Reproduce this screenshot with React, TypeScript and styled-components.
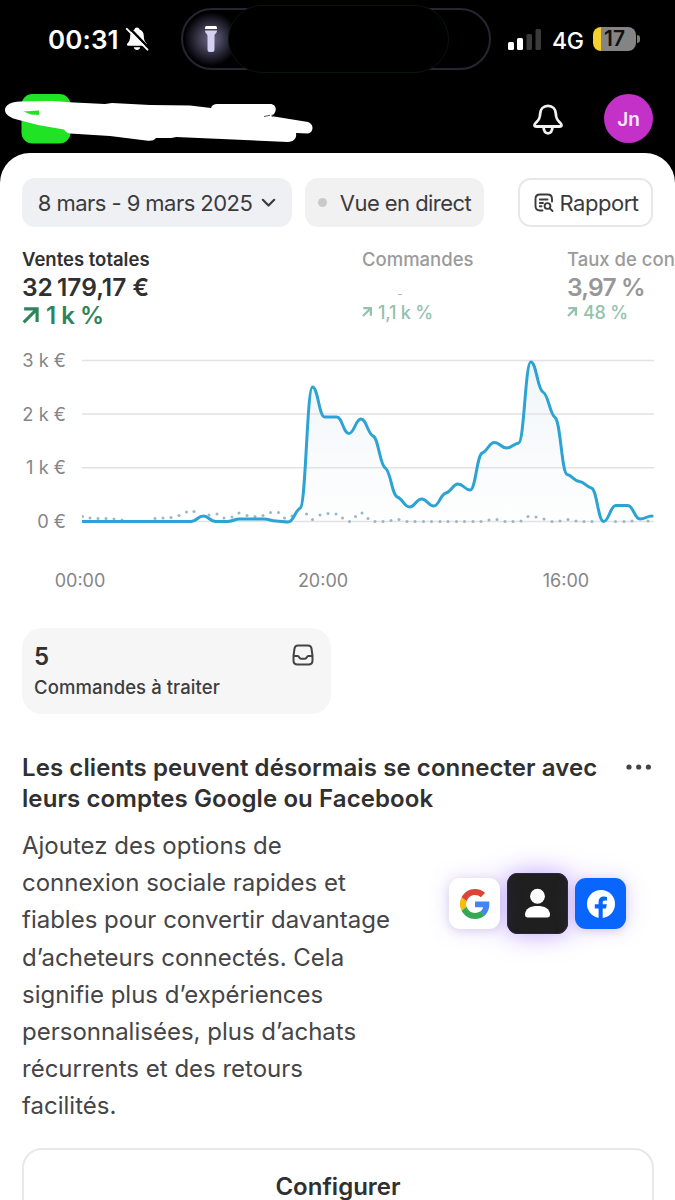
import React from "react";
import styled, { createGlobalStyle, css } from "styled-components";

const GlobalStyle = createGlobalStyle`
  * { box-sizing: border-box; }
  html, body { margin: 0; padding: 0; background: #000; }
  body { font-family: Inter, "Liberation Sans", sans-serif; color: #303030; }
`;

const Screen = styled.div`
  width: 675px;
  height: 1200px;
  overflow: hidden;
  background: #000;
  display: flex;
  flex-direction: column;
`;

/* ---------- status bar ---------- */

const StatusBar = styled.div`
  height: 80px;
  flex: none;
  display: flex;
  align-items: center;
  padding: 0 34px 2px 48px;
  color: #fff;
`;

const Clock = styled.div`
  width: 77px;
  font-size: 26px;
  font-weight: 600;
  letter-spacing: 0.1px;
  white-space: nowrap;
`;

const Island = styled.div`
  position: relative;
  width: 310px;
  height: 62px;
  margin-left: 32px;
  border: 2px solid #272532;
  border-radius: 31px;
  display: flex;
  align-items: center;
`;

const Glow = styled.div`
  width: 54px;
  height: 54px;
  margin-left: 1px;
  display: flex;
  align-items: center;
  justify-content: center;
  background: radial-gradient(closest-side, #6b6788 0%, #454259 38%, #1d1b27 74%, transparent 100%);
`;

const IslandMask = styled.div`
  position: absolute;
  left: 45px;
  top: -5px;
  width: 221px;
  height: 68px;
  border: 1px solid #07170b;
  border-radius: 34px;
  background: #000;
`;

const Signal = styled.svg`
  margin: 1px 0 0 17px;
`;

const Network = styled.div`
  margin: 3px 0 0 10px;
  width: 41px;
  font-size: 23px;
  font-weight: 500;
  letter-spacing: -0.4px;
`;

const Battery = styled.div`
  width: 43px;
  height: 24px;
  border-radius: 8px;
  background: linear-gradient(90deg, #f7cf2f 0 8px, #848484 8px);
  color: #111;
  font-size: 21px;
  line-height: 24px;
  font-weight: 600;
  text-align: center;
`;

const BatteryTip = styled.div`
  width: 3px;
  height: 8px;
  margin-left: 1px;
  border-radius: 0 3px 3px 0;
  background: #7c7c7c;
`;

/* ---------- store header ---------- */

const StoreHeader = styled.header`
  height: 73px;
  flex: none;
  display: flex;
  align-items: center;
  padding: 4px 22px 0 0;
`;

const StoreMark = styled.svg`
  flex: none;
  display: block;
`;

const BellIcon = styled.svg`
  margin: 2px 0 0 auto;
`;

const Avatar = styled.div`
  width: 49px;
  height: 49px;
  margin-left: 41px;
  border-radius: 50%;
  background: #c431c8;
  color: #f6e6f7;
  font-size: 19px;
  font-weight: 600;
  line-height: 51px;
  text-align: center;
`;

/* ---------- sheet ---------- */

const Sheet = styled.main`
  flex: 1;
  min-height: 0;
  background: #fff;
  border-radius: 30px 30px 0 0;
  padding: 25px 0 0 22px;
  overflow: hidden;
`;

const FilterRow = styled.div`
  display: flex;
  height: 49px;
  margin-right: 22px;
`;

const Pill = styled.button<{ $w: number; $bg?: string; $outlined?: boolean }>`
  width: ${(p) => p.$w}px;
  height: 49px;
  padding: 0;
  border: ${(p) => (p.$outlined ? "2px solid #e7e7e7" : "0")};
  border-radius: 13px;
  background: ${(p) => p.$bg ?? "#fff"};
  display: flex;
  align-items: center;
  justify-content: center;
  color: #3b3b3d;
  font-family: inherit;
  font-size: 22px;
  letter-spacing: -0.55px;
  white-space: nowrap;
  & + & { margin-left: 13px; }
  ${(p) => p.$outlined && css`&&& { margin-left: auto; padding-left: 2px; letter-spacing: -0.45px; }`}
  svg { flex: none; }
`;

const LiveDot = styled.span`
  width: 9px;
  height: 9px;
  border-radius: 50%;
  background: #c9c9c9;
  margin-right: 13px;
`;

const Metrics = styled.div`
  display: grid;
  grid-template-columns: 340px 205px 160px;
  margin-top: 19px;
  height: 91px;
`;

const Metric = styled.div`
  display: flex;
  flex-direction: column;
  white-space: nowrap;
`;

const MetricLabel = styled.div<{ $active?: boolean }>`
  height: 26px;
  line-height: 26px;
  font-size: 18.5px;
  font-weight: ${(p) => (p.$active ? 600 : 500)};
  color: ${(p) => (p.$active ? "#303030" : "#9b9b9b")};
`;

const MetricValue = styled.div<{ $active?: boolean }>`
  height: 31px;
  line-height: 31px;
  font-size: 24.5px;
  letter-spacing: ${(p) => (p.$active ? 0 : -0.8)}px;
  font-weight: 600;
  color: ${(p) => (p.$active ? "#303030" : "#979797")};
`;

const MetricDelta = styled.div<{ $active?: boolean }>`
  height: ${(p) => (p.$active ? 24 : 18)}px;
  display: flex;
  align-items: center;
  gap: ${(p) => (p.$active ? 7 : 6)}px;
  font-size: ${(p) => (p.$active ? 24 : 18)}px;
  letter-spacing: ${(p) => (p.$active ? -0.5 : -0.2)}px;
  font-weight: ${(p) => (p.$active ? 600 : 500)};
  color: ${(p) => (p.$active ? "#2e855c" : "#93c2ad")};
`;

const HiddenValueMark = styled.i`
  display: block;
  width: 4px;
  height: 1px;
  margin: 22px 0 8px 36px;
  background: #b5b5b5;
`;

const ChartArea = styled.section`
  display: flex;
  height: 190px;
  margin-top: 10px;
`;

const YAxis = styled.div`
  width: 44px;
  display: flex;
  flex-direction: column;
  text-align: right;
  font-size: 18.3px;
  color: #858588;
  white-space: nowrap;
  span { flex: none; height: 53.7px; line-height: 27px; }
`;

const Plot = styled.svg`
  margin-left: 16px;
  display: block;
`;

const XAxis = styled.div`
  display: flex;
  height: 26px;
  margin-top: 31px;
  margin-left: 22px;
  font-size: 18px;
  line-height: 26px;
  color: #858588;
  span { width: 72px; text-align: center; margin-right: 171px; flex: none; }
`;

const TaskCard = styled.section`
  width: 309px;
  height: 86px;
  margin-top: 34px;
  border-radius: 20px;
  background: #f6f6f6;
  padding: 14px 17px 0 12px;
  display: grid;
  grid-template-columns: 1fr auto;
  grid-template-rows: 29px 30px;
`;

const TaskCount = styled.div`
  font-size: 24px;
  line-height: 29px;
  font-weight: 600;
`;

const TaskLabel = styled.div`
  font-size: 18.5px;
  line-height: 32px;
  letter-spacing: 0.07px;
  font-weight: 500;
  color: #3d3d3f;
  white-space: nowrap;
`;

const PromoHeader = styled.div`
  display: flex;
  justify-content: space-between;
  margin-top: 38px;
`;

const PromoTitle = styled.h2`
  margin: 0;
  font-size: 24px;
  line-height: 31px;
  letter-spacing: 0.09px;
  font-weight: 600;
  white-space: nowrap;
`;

const MoreIcon = styled.svg`
  margin: 12px 23.5px 0 0;
`;

const PromoBody = styled.div`
  display: flex;
  margin-top: 13px;
`;

const PromoText = styled.p`
  margin: 0;
  width: 427px;
  font-size: 24px;
  line-height: 37.2px;
  color: #454547;
  white-space: nowrap;
`;

const Badges = styled.div`
  display: flex;
  align-items: center;
  gap: 7px;
  height: 62px;
  margin-top: 45.5px;
`;

const Badge = styled.div<{ $size: number; $bg: string; $glow: string; $front?: boolean }>`
  position: relative;
  z-index: ${(p) => (p.$front ? 0 : 1)};
  width: ${(p) => p.$size}px;
  height: ${(p) => p.$size}px;
  border-radius: 11px;
  background: ${(p) => p.$bg};
  box-shadow: ${(p) => p.$glow};
  display: flex;
  align-items: center;
  justify-content: center;
`;

const ConfigureButton = styled.button`
  display: block;
  width: 632px;
  height: 76px;
  margin-top: 23.5px;
  border: 2px solid #e8e8e8;
  border-radius: 20px;
  background: #fff;
  color: #303030;
  font-family: inherit;
  font-size: 24px;
  font-weight: 600;
`;

/* ---------- chart data, in plot pixels ---------- */

const STEP = 12.13;
const SALES = [
  521.5, 521.5, 521.5, 521.5, 521.5, 521.5, 521.5, 521.5, 521.5, 521.5, 516, 521.5,
  521.5, 519, 519, 519, 521, 522, 508, 387, 417, 417, 433.5, 419, 436, 468, 497, 507,
  499, 506, 493, 484, 490, 453, 442.5, 448, 443, 362, 392, 417.5, 474.5, 481.5, 488,
  521.5, 505.5, 505.5, 519, 516,
];

const PREVIOUS: [number, number][] = [
  [82.5, 516.5], [90, 518], [98, 518.5], [106, 518.5], [114, 519], [122, 520],
  [155, 518.5], [163, 518], [171, 517.5], [179, 515.5], [186.5, 512], [194, 511.5],
  [209, 515], [217, 514], [224, 518], [232, 517], [239, 513], [247, 515.5],
  [255, 516.5], [263, 515.5], [270.5, 512.5], [278.5, 512.5], [284.5, 518], [292, 516],
  [306.5, 514], [312.5, 519.5], [320, 515], [328, 513.5], [336, 514], [342.5, 518],
  [349.5, 521.5], [355.5, 516.5], [362, 513], [368, 518.5], [375, 521.5], [383, 521.5],
  [391, 520.5], [399, 519.5], [407, 521.5], [415, 521.5], [423.5, 521.5], [431.5, 521.5],
  [440, 521.5], [448, 521.5], [456.5, 521.5], [464.5, 521.5], [473, 521.5], [481, 521.5],
  [489, 520], [497, 519.5], [505, 521.5], [513, 521.5], [521, 521], [528, 516.5],
  [536, 517], [544, 519], [552, 521.5], [560, 521], [568, 519.5], [576, 521],
  [584, 521.5], [592, 521.5], [615.5, 521.5], [624, 521.5], [632, 521], [648, 521],
];

/* Monotone cubic interpolation through evenly spaced samples. */
function monotonePath(values: number[], step: number): string {
  const n = values.length;
  const slopes = values.slice(1).map((v, i) => (v - values[i]) / step);
  const tangents = values.map((_, i) => {
    if (i === 0 || i === n - 1) return 0;
    const a = slopes[i - 1];
    const b = slopes[i];
    if (a * b <= 0) return 0;
    return Math.sign(a) * Math.min(Math.abs(a), Math.abs(b), Math.abs(a + b) / 4) * 0.4;
  });
  let d = `M0 ${values[0]}`;
  for (let i = 1; i < n; i++) {
    const x0 = (i - 1) * step;
    const x1 = i * step;
    const h = step / 2.2;
    d += `C${x0 + h} ${values[i - 1] + tangents[i - 1] * h} ${x1 - h} ${values[i] - tangents[i] * h} ${x1} ${values[i]}`;
  }
  return d;
}

const salesPath = monotonePath(SALES, STEP);

const SalesChart = () => (
  <Plot width="573" height="190" viewBox="82 347 573 190">
    <defs>
      <linearGradient id="salesFill" x1="0" y1="0" x2="0" y2="1">
        <stop offset="0" stopColor="#f1f6fa" />
        <stop offset="1" stopColor="#fefefe" />
      </linearGradient>
    </defs>
    <path d={`${salesPath}V521.5H0Z`} transform="translate(82 0)" fill="url(#salesFill)" />
    {[360.5, 414, 467.8, 521.5].map((y) => (
      <path key={y} d={`M82 ${y}H654`} stroke="#e2e2e4" strokeWidth="1.6" />
    ))}
    {PREVIOUS.map(([x, y]) => (
      <circle key={x} cx={x} cy={y} r="1.5" fill="#98b8c4" />
    ))}
    <path
      d={salesPath}
      transform="translate(82 0)"
      fill="none"
      stroke="#2ba3d4"
      strokeWidth="3"
      strokeLinejoin="round"
      strokeLinecap="round"
    />
  </Plot>
);

const TrendArrow = ({ size, weight }: { size: number; weight: number }) => (
  <svg width={size} height={size} viewBox="0 0 16 16" fill="none" stroke="currentColor" strokeWidth={weight}>
    <path d="M2 1.8H14.2V14M14 2L1.6 14.4" />
  </svg>
);

export default function App() {
  return (
    <Screen>
      <GlobalStyle />
      <StatusBar>
        <Clock>00:31</Clock>
        <svg width="24" height="26" viewBox="0 0 24 26">
          <path
            d="M12 1.5c-1.500 0-2.300.8-2.500 2C6.500 4.600 5.200 7 5.200 10c0 4-1 5.500-2.800 7.500-.9 1-.4 2.200.9 2.200h17.400c1.300 0 1.800-1.200.9-2.200-1.800-2-2.800-3.500-2.800-7.500 0-3-1.300-5.400-4.300-6.500-.2-1.200-1-2-2.500-2z"
            fill="#fff"
          />
          <path d="M8.800 21.300h6.400c-.4 1.800-1.500 2.700-3.200 2.700s-2.800-.9-3.200-2.700z" fill="#fff" />
          <path d="M3.600 1.200L24 22.200" stroke="#000" strokeWidth="2.400" />
          <path d="M1.800 2.800L22.500 23.700" stroke="#fff" strokeWidth="1.900" strokeLinecap="round" />
        </svg>
        <Island>
          <Glow>
            <svg width="14" height="28" viewBox="0 0 14 28">
              <path d="M1 4V2.500Q1 1 2.500 1h9Q13 1 13 2.500V4z" fill="#fff" />
              <path d="M1 5.500h12c0 3-2.500 3.200-2.500 5.500v13.800q0 2.200-2.200 2.200H5.700q-2.200 0-2.200-2.200V11C3.500 8.700 1 8.500 1 5.500z" fill="#d3d0f2" />
            </svg>
          </Glow>
          <IslandMask />
        </Island>
        <Signal width="34" height="22" viewBox="0 0 34 22">
          <rect x="0" y="13" width="6" height="8" rx="1.500" fill="#fff" />
          <rect x="9" y="9" width="6" height="12" rx="1.500" fill="#fff" />
          <rect x="18.500" y="5" width="5.500" height="16" rx="1.500" fill="#3a3a3a" />
          <rect x="27.500" y="0" width="5.500" height="21" rx="1.500" fill="#3a3a3a" />
        </Signal>
        <Network>4G</Network>
        <Battery>17</Battery>
        <BatteryTip />
      </StatusBar>

      <StoreHeader>
        <StoreMark width="320" height="52" viewBox="0 93 320 52">
          <rect x="21.500" y="94" width="49" height="49.500" rx="11" fill="#21e326" />
          <path
            d="M5 110C5 105 11 102 20 101.500L52 101L74 102.500L105 104L112 103L150 105L190 105.500L211 108C212 105 214 104 217 104L270 104C278 104 277 114 271 116L308 122C314 124 314 132 308 133.500L296 133C297 138 294 142 288 142L176 137C174 138 170 138 156 138C154 141 150 141 146 140.500L110 136L70 133.500C67 133 65 131 64 129.500L38 125L15 119C9 117 5 114 5 110Z"
            fill="#fff"
          />
          <path d="M23.500 111.500L39 110.500V115L31 114.500Z" fill="#21e326" />
          <path d="M264 116.500L270 115.300M272.300 114.500V117" stroke="#555" strokeWidth="1" />
        </StoreMark>
        <BellIcon width="30" height="32" viewBox="0 0 30 32" fill="none" stroke="#f1f1f1" strokeWidth="2.800" strokeLinejoin="round">
          <path d="M15 1.900c-4.800 0-7.600 3.400-7.800 7.600-.2 4.600-.9 6-3.800 8.700-1.200 1.100-1.900 1.900-1.900 2.700 0 1 .8 1.600 2 1.600h23c1.200 0 2-.6 2-1.600 0-.8-.7-1.600-1.900-2.700-2.900-2.700-3.600-4.100-3.800-8.700C22.600 5.300 19.800 1.900 15 1.900z" />
          <path d="M10.500 23c.3 4 2 6.300 4.500 6.300s4.200-2.300 4.500-6.300" />
        </BellIcon>
        <Avatar>Jn</Avatar>
      </StoreHeader>

      <Sheet>
        <FilterRow>
          <Pill $w={270} $bg="#eef0f4">
            8 mars - 9 mars 2025
            <svg width="15" height="10" viewBox="0 0 15 10" fill="none" stroke="currentColor" strokeWidth="2.200" strokeLinecap="round" strokeLinejoin="round" style={{ marginLeft: 9 }}>
              <path d="M1.800 1.800L7.500 7.500L13.200 1.800" />
            </svg>
          </Pill>
          <Pill $w={179} $bg="#f1f1f1">
            <LiveDot />
            Vue en direct
          </Pill>
          <Pill $w={135} $outlined>
            <svg width="20" height="20" viewBox="0 0 20 20" fill="none" stroke="currentColor" strokeWidth="1.900" strokeLinecap="round" style={{ marginRight: 5 }}>
              <path d="M8.500 17.500H6Q1.500 17.500 1.500 13V6Q1.500 1.500 6 1.500H13.500Q18 1.500 18 6V8.500" />
              <path d="M5.800 6.500H13.500M5.800 10H9M5.800 13.200H7.500" />
              <circle cx="13.500" cy="13" r="2.900" />
              <path d="M15.800 15.300L18.500 18" />
            </svg>
            Rapport
          </Pill>
        </FilterRow>

        <Metrics>
          <Metric>
            <MetricLabel $active>Ventes totales</MetricLabel>
            <MetricValue $active>32{"\u2009"}179,17 €</MetricValue>
            <MetricDelta $active>
              <TrendArrow size={17} weight={3} />1 k %
            </MetricDelta>
          </Metric>
          <Metric>
            <MetricLabel>Commandes</MetricLabel>
            <HiddenValueMark />
            <MetricDelta>
              <TrendArrow size={10} weight={3.6} />1,1 k %
            </MetricDelta>
          </Metric>
          <Metric>
            <MetricLabel>Taux de con</MetricLabel>
            <MetricValue>3,97 %</MetricValue>
            <MetricDelta>
              <TrendArrow size={10} weight={3.6} />48 %
            </MetricDelta>
          </Metric>
        </Metrics>

        <ChartArea>
          <YAxis>
            <span>3 k €</span>
            <span>2 k €</span>
            <span>1 k €</span>
            <span>0 €</span>
          </YAxis>
          <SalesChart />
        </ChartArea>
        <XAxis>
          <span>00:00</span>
          <span>20:00</span>
          <span>16:00</span>
        </XAxis>

        <TaskCard>
          <TaskCount>5</TaskCount>
          <svg width="22" height="22" viewBox="0 0 22 22" fill="none" stroke="#444" strokeWidth="2" strokeLinejoin="round" style={{ marginTop: 2 }}>
            <path d="M6 1.500H16Q19 1.500 19.500 4.500L20.500 12V16.500Q20.500 20.500 16.500 20.500H5.500Q1.500 20.500 1.500 16.500V12L2.500 4.500Q3 1.500 6 1.500Z" />
            <path d="M1.500 12H5.800C7.300 12 7 14.800 9 14.800H13C15 14.800 14.700 12 16.200 12H20.500" />
          </svg>
          <TaskLabel>Commandes à traiter</TaskLabel>
        </TaskCard>

        <PromoHeader>
          <PromoTitle>
            Les clients peuvent désormais se connecter avec
            <br />
            leurs comptes Google ou Facebook
          </PromoTitle>
          <MoreIcon width="26" height="6" viewBox="0 0 26 6" fill="#444">
            <circle cx="3" cy="3" r="2.600" />
            <circle cx="12.700" cy="3" r="2.600" />
            <circle cx="22.400" cy="3" r="2.600" />
          </MoreIcon>
        </PromoHeader>

        <PromoBody>
          <PromoText>
            Ajoutez des options de
            <br />
            connexion sociale rapides et
            <br />
            fiables pour convertir davantage
            <br />
            d’acheteurs connectés. Cela
            <br />
            signifie plus d’expériences
            <br />
            personnalisées, plus d’achats
            <br />
            récurrents et des retours
            <br />
            facilités.
          </PromoText>
          <Badges>
            <Badge $size={51} $bg="#fff" $glow="0 2px 8px rgba(90,60,160,.16), 0 0 24px rgba(130,90,240,.2)">
              <svg width="30" height="30" viewBox="0 0 48 48">
                <path fill="#FBBC05" d="M10.530 28.590a14.500 14.500 0 0 1 0-9.180l-7.970-6.190a24 24 0 0 0 0 21.560z" />
                <path fill="#DB4437" d="M24 9.500c3.540 0 6.710 1.220 9.210 3.600l6.850-6.850C35.900 2.380 30.470 0 24 0 14.620 0 6.510 5.380 2.560 13.220l7.980 6.190C12.430 13.720 17.740 9.500 24 9.500z" />
                <path fill="#4285F4" d="M46.980 24.550c0-1.570-.15-3.090-.38-4.550H24v9.020h12.940c-.58 2.960-2.260 5.480-4.780 7.180l7.730 6c4.510-4.180 7.090-10.360 7.090-17.650z" />
                <path fill="#34A853" d="M24 48c6.480 0 11.930-2.130 15.890-5.810l-7.730-6c-2.150 1.450-4.920 2.300-8.160 2.300-6.260 0-11.570-4.220-13.470-9.910l-7.980 6.190C6.510 42.620 14.620 48 24 48z" />
              </svg>
            </Badge>
            <Badge $front $size={61} $bg="#1f1f1f" $glow="inset 0 0 0 1px #2c2740, 0 0 24px 1px rgba(132,82,255,.5)">
              <svg width="27" height="31" viewBox="0 0 28 32" fill="#fff">
                <circle cx="14" cy="8.500" r="7.700" />
                <path d="M1 28C1 21 7 18.500 14 18.500S27 21 27 28Q27 30.500 24.500 30.500H3.500Q1 30.500 1 28Z" />
              </svg>
            </Badge>
            <Badge $size={51} $bg="#0866ff" $glow="0 2px 8px rgba(90,60,160,.18), 0 0 24px rgba(130,90,240,.22)">
              <svg width="30" height="30" viewBox="0 0 30 30">
                <circle cx="15" cy="15" r="14" fill="#fff" />
                <path d="M12.600 29V19.500H8.800V15.300H12.600V13C12.600 9.300 14.800 7.500 18 7.500Q19.800 7.500 21 7.900V11.500H19C17.300 11.500 16.700 12.400 16.700 13.800V15.300H20.800L20 19.500H16.700V29Z" fill="#0866ff" />
              </svg>
            </Badge>
          </Badges>
        </PromoBody>

        <ConfigureButton>Configurer</ConfigureButton>
      </Sheet>
    </Screen>
  );
}
